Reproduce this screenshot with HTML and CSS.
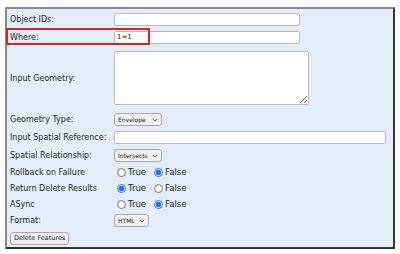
FILE: index.html
```html
<!DOCTYPE html>
<html lang="en">
  <head>
    <meta charset="UTF-8" />
    <meta name="viewport" content="width=device-width, initial-scale=1.0" />
    <title>Delete Features</title>
    <link rel="stylesheet" href="styles.css">
  </head>
  <body>
    <form class="panel">
      <div class="row">
        <label class="label">Object IDs:</label>
        <input type="text" class="field" />
      </div>
      <div class="row">
        <label class="label">Where:</label>
        <input type="text" class="field" value="1=1" />
      </div>
      <div class="row row-tall">
        <label class="label">Input Geometry:</label>
        <textarea class="area"></textarea>
      </div>
      <div class="row">
        <label class="label">Geometry Type:</label>
        <span class="pick-wrap">
          <select class="pick pick-long">
            <option>Envelope</option>
          </select>
          <svg class="chevron" viewBox="0 0 6 4" width="6" height="4"><path d="M0.8 0.8 L3 3 L5.2 0.8" /></svg>
        </span>
      </div>
      <div class="row">
        <label class="label">Input Spatial Reference:</label>
        <input type="text" class="field field-wide" />
      </div>
      <div class="row">
        <label class="label">Spatial Relationship:</label>
        <span class="pick-wrap">
          <select class="pick pick-long">
            <option>Intersects</option>
          </select>
          <svg class="chevron" viewBox="0 0 6 4" width="6" height="4"><path d="M0.8 0.8 L3 3 L5.2 0.8" /></svg>
        </span>
      </div>
      <div class="row row-short">
        <label class="label">Rollback on Failure</label>
        <div class="choices">
          <label class="choice"><input type="radio" name="rollback" /> True</label>
          <label class="choice"><input type="radio" name="rollback" checked /> False</label>
        </div>
      </div>
      <div class="row row-short">
        <label class="label">Return Delete Results</label>
        <div class="choices">
          <label class="choice"><input type="radio" name="results" checked /> True</label>
          <label class="choice"><input type="radio" name="results" /> False</label>
        </div>
      </div>
      <div class="row row-short">
        <label class="label">ASync</label>
        <div class="choices">
          <label class="choice"><input type="radio" name="async" /> True</label>
          <label class="choice"><input type="radio" name="async" checked /> False</label>
        </div>
      </div>
      <div class="row row-short">
        <label class="label">Format:</label>
        <span class="pick-wrap">
          <select class="pick pick-short">
            <option>HTML</option>
          </select>
          <svg class="chevron" viewBox="0 0 6 4" width="6" height="4"><path d="M0.8 0.8 L3 3 L5.2 0.8" /></svg>
        </span>
      </div>
      <div class="row row-button">
        <button type="button" class="submit">Delete Features</button>
      </div>

      <!-- highlight around the Where row -->
      <div class="highlight"></div>
    </form>
  </body>
</html>
```

FILE: styles.css
```css
body {
  margin: 0;
  background-color: white;
  font-family: "DejaVu Sans", Verdana, sans-serif;
  font-size: 8px;
  color: #1e1e1e;
}
.panel {
  position: relative;
  margin: 7px 5px 0 5px;
  height: 242px;
  box-sizing: border-box;
  padding: 1px 3px 0 3px;
  border: 2px outset #8a8a8a;
  background-color: #e3edf7;
}
.row {
  display: flex;
  align-items: center;
  height: 18px;
}
.row-tall {
  height: 64px;
}
.row-short {
  height: 16px;
}
.row-button {
  height: 20px;
}
.label {
  width: 104px;
  flex: none;
}
.field {
  width: 186px;
  height: 13px;
  box-sizing: border-box;
  margin: 0;
  padding: 0 2px;
  border: 1px solid #b9b9b9;
  border-radius: 2px;
  background-color: white;
  font-family: "DejaVu Sans", Verdana, sans-serif;
  font-size: 7px;
  color: #222;
}
.field-wide {
  width: 272px;
}
.area {
  width: 195px;
  height: 54px;
  box-sizing: border-box;
  margin: 0;
  border: 1px solid #b9b9b9;
  border-radius: 2px;
  background-color: white;
}
.pick-wrap {
  position: relative;
  display: inline-flex;
}
.pick {
  appearance: none;
  height: 13px;
  box-sizing: border-box;
  margin: 0;
  padding: 0 0 0 3px;
  border: 1px solid #a8a8a8;
  border-radius: 3px;
  background-color: #efefef;
  font-family: "DejaVu Sans", Verdana, sans-serif;
  font-size: 6px;
  color: #1e1e1e;
}
.pick-long {
  width: 48px;
}
.pick-short {
  width: 35px;
}
.chevron {
  position: absolute;
  right: 4px;
  top: 5px;
  fill: none;
  stroke: #444;
  stroke-width: 0.9;
}
.choices {
  display: flex;
  gap: 8px;
  padding-left: 3px;
}
.choice {
  display: flex;
  align-items: center;
  gap: 1px;
  font-size: 8.5px;
}
.choice input {
  width: 9px;
  height: 9px;
  margin: 0 1px 0 0;
  accent-color: #1a73e8;
}
.submit {
  height: 13px;
  margin: 0;
  padding: 0 3px;
  border: 1px solid #a8a8a8;
  border-radius: 3px;
  background-color: #efefef;
  font-family: "DejaVu Sans", Verdana, sans-serif;
  font-size: 6.5px;
  color: #222;
}
.highlight {
  position: absolute;
  left: -1px;
  top: 19px;
  width: 144px;
  height: 17px;
  border: 2px solid #e02020;
  box-sizing: border-box;
}
```
